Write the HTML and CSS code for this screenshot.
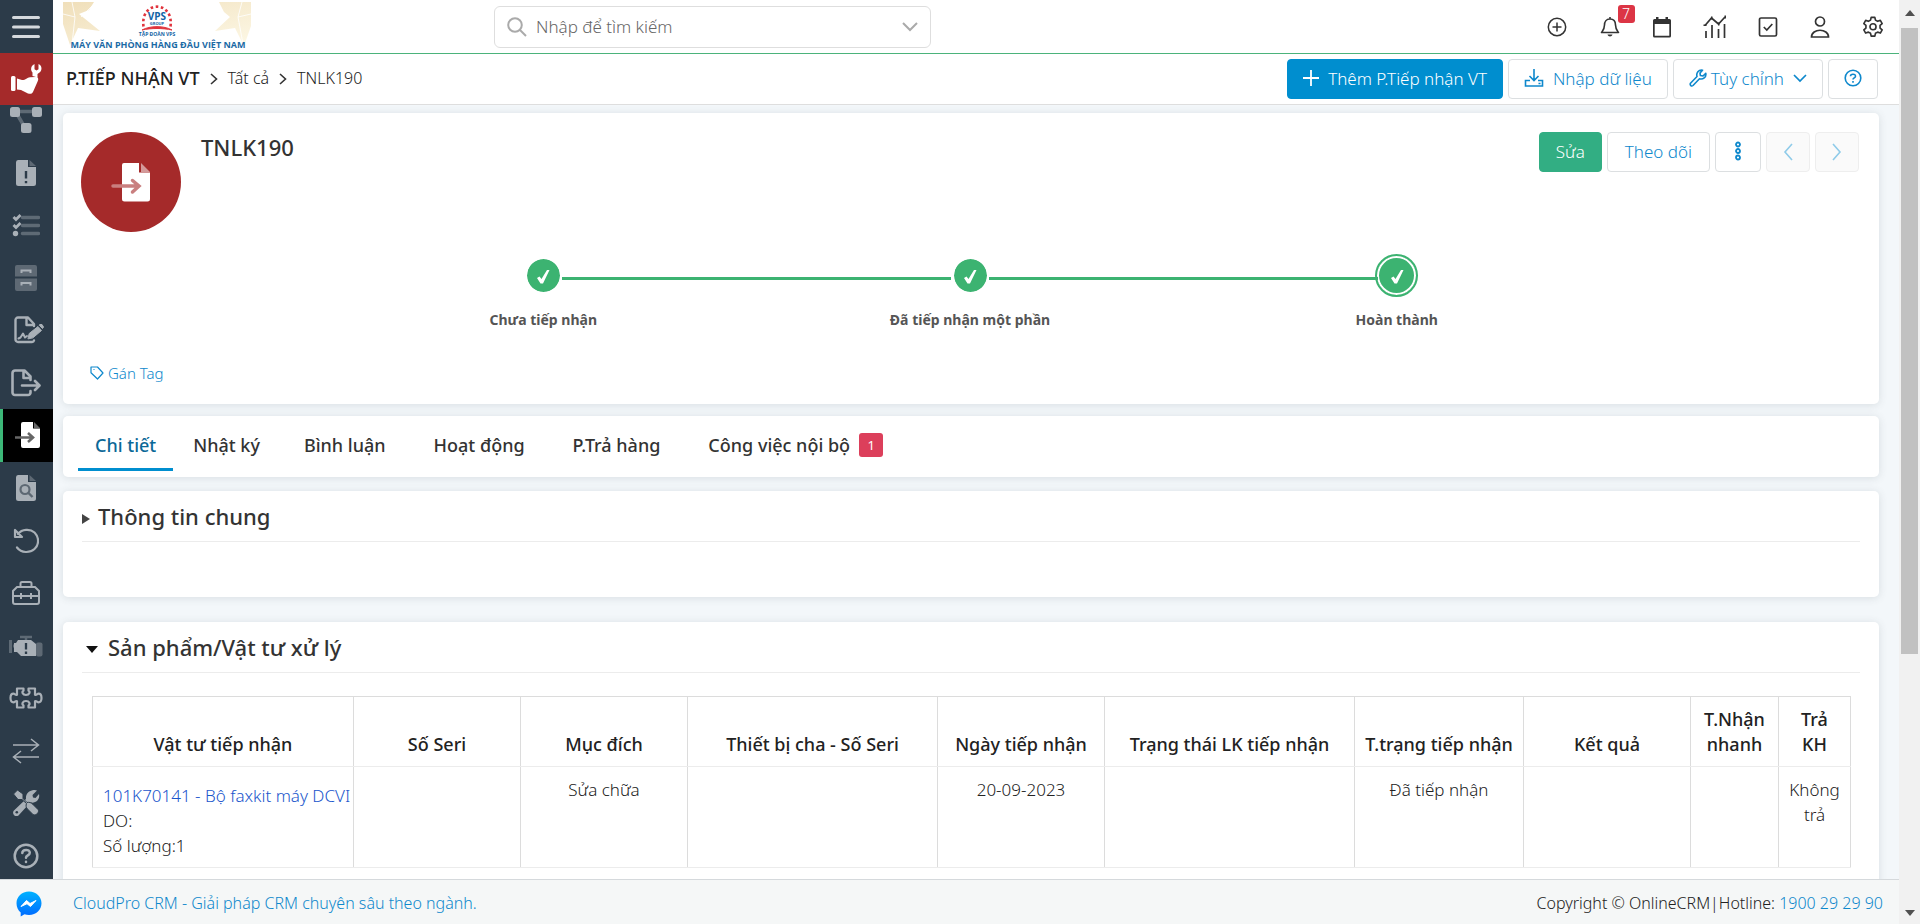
FILE: index.html
```html
<!DOCTYPE html>
<html lang="vi">
<head>
<meta charset="utf-8">
<meta name="viewport" content="width=device-width, initial-scale=1">
<title>TNLK190 - P.Tiếp nhận VT</title>
<link rel="stylesheet" href="styles.css">
</head>
<body>
<div class="app">
  <aside class="sidebar">
    <button class="menu-toggle" type="button" aria-label="Menu"><svg width="28" height="24" viewBox="0 0 28 24" fill="none" stroke="#d5d9dd" stroke-width="3" stroke-linecap="round"><path d="M1.500 2.500h25M1.500 12h25M1.500 21.500h25"/></svg></button>
    <a class="module-home" href="#" aria-label="Dịch vụ"><svg width="32" height="32" viewBox="0 0 32 32" fill="#fff"><rect x="1" y="13" width="4.500" height="15" rx="1.500"/><path d="M7 15.500l5 1.500c4 0 5-2.500 8-2.800l6-.2c2 0 3 2 1.600 4.500L23 29c-1 2-3 2-5 1.500L11 27l-4-.5z"/><path d="M22.500 13V9.500C20 7 21 2.500 24.500 1v5.200l2 1.300 2-1.300V1c3.500 1.500 4 6 1 8.500L27.500 11v3.500z"/></svg></a>
    <nav class="side-nav">
      <ul class="side-list">
        <li><a href="#" aria-label="Quy trình"><svg width="34" height="28" viewBox="0 0 34 28" fill="currentColor"><path d="M8 5.500h18M8 8l7 12" stroke="currentColor" stroke-width="3.500" opacity=".4"/><rect x="1" y="1" width="10" height="10" rx="2.500"/><rect x="23" y="1" width="10" height="10" rx="2.500"/><rect x="12" y="17" width="10.500" height="10" rx="2.500"/></svg></a></li>
        <li><a href="#" aria-label="Sự cố"><svg width="22" height="28" viewBox="0 0 22 28"><path d="M3 1h10v7h8v16.500a2.500 2.500 0 0 1-2.500 2.500H3.500A2.500 2.500 0 0 1 1 24.500V3.500A2.500 2.500 0 0 1 3 1z" fill="currentColor"/><path d="M14.500 1L21 7h-6.500z" fill="currentColor" opacity=".4"/><path d="M11 12v7.500M11 22v2.200" stroke="#2c3b49" stroke-width="2.400"/></svg></a></li>
        <li><a href="#" aria-label="Công việc"><svg width="28" height="24" viewBox="0 0 28 24"><path d="M10.500 4.500h16M10.500 12.500h16M10.500 20.500h16" stroke="currentColor" stroke-width="3.500" stroke-linecap="round" opacity=".4"/><path d="M1.500 4l2.500 2.500L8.500 2M1.500 12l2.500 2.500L8.500 10" stroke="currentColor" stroke-width="2.800" fill="none"/><circle cx="3.500" cy="20.500" r="2.700" fill="currentColor"/></svg></a></li>
        <li><a href="#" aria-label="Kho lưu trữ"><svg width="24" height="28" viewBox="0 0 24 28"><path d="M3 1h18a2 2 0 0 1 2 2v9.500H1V3a2 2 0 0 1 2-2zM1 14.500h22V25a2 2 0 0 1-2 2H3a2 2 0 0 1-2-2z" fill="currentColor" opacity=".4"/><path d="M7.500 9V6.500h9V9M7.500 21.500V19h9v2.500" stroke="currentColor" stroke-width="2" fill="none"/></svg></a></li>
        <li><a class="wide-icon" href="#" aria-label="Hợp đồng"><svg width="32" height="28" viewBox="0 0 32 28" fill="none" stroke="currentColor" stroke-width="2.400" stroke-linejoin="round" stroke-linecap="round"><path d="M21 10V8l-6-6.500H5A2.500 2.500 0 0 0 2.500 4v19.500A2.500 2.500 0 0 0 5 26h14a2 2 0 0 0 2-1.500M13.500 2v7H20"/><path d="M5.500 22.500l2-1 2.500-4 2 4 2-1.500" stroke-width="2"/><path d="M15 22.500l1.200-5L25 10.500l3.500 4L20 21.700zM27 8.500l2 0 1.500 2.500-1 1.500-3-3z" fill="currentColor" stroke-width="1"/></svg></a></li>
        <li><a href="#" aria-label="Phiếu xuất"><svg width="30" height="28" viewBox="0 0 30 28" fill="none" stroke="currentColor" stroke-width="2.600" stroke-linejoin="round" stroke-linecap="round"><path d="M19.500 11V7.500l-6-6H4A2.500 2.500 0 0 0 1.500 4v19.500A2.500 2.500 0 0 0 4 26h13a2.500 2.500 0 0 0 2.500-2.500V22M12.500 2v7H19M11 16.500h17M24 12l4.500 4.500L24 21"/></svg></a></li>
        <li><a class="active" href="#" aria-label="P.Tiếp nhận VT" aria-current="page"><svg width="28" height="28" viewBox="0 0 28 28"><path d="M9 1h10v6.500h7V25a2 2 0 0 1-2 2H9a2 2 0 0 1-2-2V3a2 2 0 0 1 2-2z" fill="#fff"/><path d="M20 1l6 6h-6z" fill="#666"/><path d="M1 16.500h17M14 12l5 4.500-5 4.500" fill="none" stroke="#666" stroke-width="2.600"/></svg></a></li>
        <li><a href="#" aria-label="Tra cứu"><svg width="22" height="28" viewBox="0 0 22 28"><path d="M3 1h10v7h8v16.500a2.500 2.500 0 0 1-2.500 2.500H3.500A2.500 2.500 0 0 1 1 24.500V3.500A2.500 2.500 0 0 1 3 1z" fill="currentColor"/><path d="M14.500 1L21 7h-6.500z" fill="currentColor" opacity=".4"/><circle cx="10" cy="15.500" r="4.500" fill="none" stroke="#5d6873" stroke-width="2.200"/><path d="M13.500 19l4 4" stroke="#5d6873" stroke-width="2.400"/></svg></a></li>
        <li><a href="#" aria-label="Hoàn trả"><svg width="26" height="26" viewBox="0 0 26 26" fill="none" stroke="currentColor" stroke-width="2.200" stroke-linejoin="round" stroke-linecap="round"><path d="M2 2v7h7zM5 6c4-5 12-5.500 16.500-1.500 5 5 4.500 12.500 0 16.500-4.500 4-13 4.500-17.500-1.500"/></svg></a></li>
        <li><a href="#" aria-label="Bảo trì"><svg width="28" height="26" viewBox="0 0 28 26" fill="none" stroke="currentColor" stroke-width="2"><path d="M8.500 7V3.500a1.500 1.500 0 0 1 1.500-1.500h8a1.500 1.500 0 0 1 1.500 1.500V7M5 7h18l4 4v11a2 2 0 0 1-2 2H3a2 2 0 0 1-2-2V11zM1 16h26M9 13v6M19 13v6"/></svg></a></li>
        <li><a href="#" aria-label="Thiết bị"><svg width="34" height="22" viewBox="0 0 34 22"><path d="M1.500 5v13M4 11h4" stroke="currentColor" stroke-width="3" opacity=".4"/><rect x="27" y="7.500" width="6.500" height="14" rx="2" fill="currentColor" opacity=".4"/><path d="M11 2h12M17 2v4" stroke="currentColor" stroke-width="2.500" opacity=".4"/><path d="M9 5h13l5 4v12H12l-4-4H5V8h2z" fill="currentColor"/><path d="M17 8v6.500M17 16.500v2.500" stroke="#2c3b49" stroke-width="2.300"/></svg></a></li>
        <li><a href="#" aria-label="Tiện ích"><svg width="34" height="22" viewBox="0 0 34 22" fill="none" stroke="currentColor" stroke-width="2.200" stroke-linejoin="round"><path d="M8 1.500h6.500v2.200c-2 1.300-1 4.300 2.500 4.300s4.500-3 2.500-4.300V1.500H26v6.200c1.500.8 2-1 3.500-1 4 0 4 8.600 0 8.600-1.500 0-2-1.800-3.500-1v6.200h-6.500v-2.200c2-1.300 1-4.300-2.500-4.300s-4.500 3-2.500 4.300v2.200H8v-6.200c-1.500-.8-2 1-3.500 1-4 0-4-8.600 0-8.600 1.500 0 2 1.800 3.500 1z"/></svg></a></li>
        <li><a href="#" aria-label="Luân chuyển"><svg width="28" height="26" viewBox="0 0 28 26" fill="none" stroke="currentColor" stroke-width="1.500"><path d="M1 7h25M19 1l7.500 6L19 13M27 19H2M9 13l-7.500 6L9 25"/></svg></a></li>
        <li><a href="#" aria-label="Công cụ"><svg width="28" height="28" viewBox="0 0 28 28" fill="currentColor"><path d="M20.500 1.200c2-.5 3.500-.2 4.500.3L20.500 6l.5 2.500 2.500.5L27 5c1.200 5-3 9.500-8 8.500l-3 2.500L6.500 26.500c-3 2-7-1.500-4.800-4.800L14 10c-.5-4.500 2-7.800 6.500-8.800z"/><path d="M1.500 5l4-4 5.500 4v4.500l4 4c2-.5 4 0 5.500 1.500l5.500 5.500c2 2.500-2.500 7-5 5l-5.500-5.500c-1.500-1.500-1.800-3.500-1-5.500l-4.500-4H6z" stroke="#2c3b49" stroke-width="1"/><circle cx="4.800" cy="23.300" r="1.300" fill="#2c3b49"/></svg></a></li>
        <li><a href="#" aria-label="Trợ giúp"><svg width="26" height="26" viewBox="0 0 26 26" fill="none" stroke="currentColor" stroke-width="2.500" stroke-linecap="round"><circle cx="13" cy="13" r="11.300"/><path d="M9.300 10c0-4 7.500-4.200 7.500-.3 0 2.800-3.800 2.500-3.800 5M13 18.800v.2"/></svg></a></li>
      </ul>
    </nav>
  </aside>

  <header class="topbar">
    <a class="brand" href="#" aria-label="VPS Group">
      <svg width="188" height="50" viewBox="0 0 188 50">
        <defs><linearGradient id="gold" x1="0" y1="0" x2="1" y2="1"><stop offset="0" stop-color="#f0dfba"/><stop offset="1" stop-color="#fdf8e6"/></linearGradient></defs>
        <path fill="url(#gold)" d="M0 0h31l-5 8-10 4 21 17-22-3-8 17L0 22zM188 0h-32l5 10 6 5-15 14 20-3 9 18 7-20z"/>
        <path d="M0 12l12 3L9 0M12 15l-3 27M18 15L33 0M188 12l-13 3 4-15M175 15l5 27" stroke="#fff" stroke-width="1" fill="none" opacity=".8"/>
        <path d="M80.500 24.500C77-2 111-2 107.500 24.500" fill="none" stroke="#e0333c" stroke-width="2.600" stroke-dasharray="2.600 2.600"/>
        <path d="M79 28c8-4.500 22-4.500 30 0-9-2-21-2-30 0z" fill="#e0333c" stroke="#e0333c"/>
        <text class="logo-vps" x="94" y="18" text-anchor="middle">VPS</text>
        <text class="logo-tiny" x="94" y="23" text-anchor="middle">GROUP</text>
        <text class="logo-small" x="94" y="34" text-anchor="middle">TẬP ĐOÀN VPS</text>
        <text class="logo-line" x="95" y="46" text-anchor="middle">MÁY VĂN PHÒNG HÀNG ĐẦU VIỆT NAM</text>
      </svg>
    </a>
    <form class="search" role="search">
      <svg width="20" height="20" viewBox="0 0 20 20" fill="none" stroke="#aaa" stroke-width="2"><circle cx="8" cy="8" r="6.800"/><path d="M13 13l6 6"/></svg>
      <input class="search-input" type="text" placeholder="Nhập để tìm kiếm" aria-label="Nhập để tìm kiếm">
      <svg width="16" height="10" viewBox="0 0 16 10" fill="none" stroke="#aaa" stroke-width="2"><path d="M1 1l7 7 7-7"/></svg>
    </form>
    <div class="top-icons">
      <button type="button" aria-label="Tạo nhanh"><svg width="20" height="20" viewBox="0 0 20 20" fill="none" stroke="currentColor" stroke-width="1.500"><circle cx="10" cy="10" r="8.700"/><path d="M10 5.500v9M5.500 10h9"/></svg></button>
      <button type="button" aria-label="Thông báo"><svg width="20" height="22" viewBox="0 0 20 22" fill="none" stroke="currentColor" stroke-width="1.600" stroke-linejoin="round"><path d="M10 1v2M10 3C6 3 4.500 6 4.500 9c0 4-1.500 5.500-3 7.500h17c-1.500-2-3-3.500-3-7.500 0-3-1.500-6-5.500-6z"/><path d="M7.500 18.500h5c-.5 2.500-4.500 2.500-5 0z" fill="currentColor" stroke="none"/></svg><span class="count">7</span></button>
      <button type="button" aria-label="Lịch"><svg width="20" height="22" viewBox="0 0 20 22"><path d="M1 4.500A1.500 1.500 0 0 1 2.500 3H4V1h2.500v2h7V1H16v2h1.500A1.500 1.500 0 0 1 19 4.500V20a1.500 1.500 0 0 1-1.500 1.500h-15A1.500 1.500 0 0 1 1 20zM2.700 8v11.800h14.600V8z" fill="currentColor" fill-rule="evenodd"/></svg></button>
      <button type="button" aria-label="Báo cáo"><svg width="24" height="24" viewBox="0 0 24 24" fill="none" stroke="currentColor" stroke-width="1.700"><path d="M2 10.500L8.500 3l7 6L22 2M3 16v7M9 10v13M15.500 14v9M21.500 9v14"/><path d="M2 9.500v1.500M8 3h1.500M15 9h1.500M21.500 2H23" stroke-width="3"/></svg></button>
      <button type="button" aria-label="Việc cần làm"><svg width="20" height="22" viewBox="0 0 20 22" fill="none" stroke="currentColor" stroke-width="1.700"><rect x="1.500" y="2" width="17" height="18" rx="1.500"/><path d="M5.800 11l3 3 5.500-6"/></svg></button>
      <button type="button" aria-label="Tài khoản"><svg width="20" height="24" viewBox="0 0 20 24" fill="none" stroke="currentColor" stroke-width="1.700"><circle cx="10" cy="6.500" r="4.500"/><path d="M1.500 22c0-9 17-9 17 0z"/></svg></button>
      <button type="button" aria-label="Cài đặt"><svg width="22" height="24" viewBox="0 0 24 24" fill="none" stroke="currentColor" stroke-width="1.800" stroke-linejoin="round"><path d="M10 1.500h4l.7 3 2.300 1.300 3-1 2 3.500-2.300 2v2.800l2.300 2-2 3.500-3-1-2.300 1.300-.7 3.100h-4l-.7-3.100L7 17.600l-3 1-2-3.500 2.300-2v-2.800L2 8.300l2-3.500 3 1 2.300-1.300z"/><circle cx="12" cy="11.700" r="3.300"/></svg></button>
    </div>
  </header>

  <div class="crumb-bar">
    <nav class="crumbs" aria-label="Breadcrumb">
      <a class="crumb-module" href="#">P.TIẾP NHẬN VT</a>
      <svg width="8" height="12" viewBox="0 0 8 12" fill="none" stroke="#333" stroke-width="1.600"><path d="M1 1l5.500 5L1 11"/></svg>
      <a class="crumb" href="#">Tất cả</a>
      <svg width="8" height="12" viewBox="0 0 8 12" fill="none" stroke="#333" stroke-width="1.600"><path d="M1 1l5.500 5L1 11"/></svg>
      <span class="crumb">TNLK190</span>
    </nav>
    <div class="actions">
      <button class="btn btn-primary" type="button"><svg width="16" height="16" viewBox="0 0 16 16" fill="none" stroke="#fff" stroke-width="1.800"><path d="M8 0v16M0 8h16"/></svg>Thêm P.Tiếp nhận VT</button>
      <button class="btn" type="button"><svg width="20" height="20" viewBox="0 0 20 20" fill="none" stroke="currentColor" stroke-width="1.600"><path d="M10 1v11M5.500 8l4.500 4.500L14.500 8M6 12.500H1.500V18h17v-5.500H14M14.500 15.500h2"/></svg>Nhập dữ liệu</button>
      <button class="btn btn-tight" type="button"><svg width="18" height="18" viewBox="0 0 18 18" fill="none" stroke="currentColor" stroke-width="1.600" stroke-linejoin="round"><path d="M13.500 1.200C9.500.5 7 4 8 7.500l-6.500 6.700c-1 2 1 3.500 2.500 2.300l6.500-6.700c3.500 1 7-1.500 6.300-5.500L14 7l-2.600-.5L11 4z"/></svg>Tùy chỉnh<svg class="btn-caret" width="14" height="9" viewBox="0 0 14 9" fill="none" stroke="currentColor" stroke-width="1.700"><path d="M1 1l6 6 6-6"/></svg></button>
      <button class="btn" type="button" aria-label="Trợ giúp"><svg width="18" height="18" viewBox="0 0 18 18" fill="none" stroke="currentColor" stroke-width="1.600"><circle cx="9" cy="9" r="7.800"/><path d="M6.500 7.200c0-2.500 5-2.800 5 0 0 1.600-2.500 1.700-2.500 3.300M9 12v1.700"/></svg></button>
    </div>
  </div>

  <main class="content">
    <section class="card summary">
      <div class="record-head">
        <div class="avatar"><svg width="40" height="40" viewBox="0 0 40 40"><path d="M13 1h15v9.500h11V37a2.500 2.500 0 0 1-2.500 2.500h-23A2.500 2.500 0 0 1 11 37V3a2 2 0 0 1 2-2z" fill="#fff"/><path d="M30 1l9 9h-9z" fill="#d49a9a"/><path d="M2 24h25M21.500 18.500L28 24l-6.500 6" fill="none" stroke="#c97f7f" stroke-width="3.500" stroke-linecap="round"/></svg></div>
        <h1 class="record-title">TNLK190</h1>
        <div class="actions">
          <button class="btn btn-green" type="button">Sửa</button>
          <button class="btn btn-wide" type="button">Theo dõi</button>
          <button class="btn" type="button" aria-label="Thêm"><svg class="dots" width="8" height="20" viewBox="0 0 8 20" fill="none" stroke="currentColor" stroke-width="1.800"><circle cx="4" cy="3.500" r="2"/><circle cx="4" cy="10" r="2"/><circle cx="4" cy="16.500" r="2"/></svg></button>
          <button class="btn" type="button" disabled aria-label="Trước"><svg width="10" height="18" viewBox="0 0 10 18" fill="none" stroke="currentColor" stroke-width="1.600"><path d="M9 1L2 9l7 8"/></svg></button>
          <button class="btn" type="button" disabled aria-label="Sau"><svg width="10" height="18" viewBox="0 0 10 18" fill="none" stroke="currentColor" stroke-width="1.600"><path d="M1 1l7 8-7 8"/></svg></button>
        </div>
      </div>
      <ol class="steps">
        <li class="step"><span class="dot"><svg width="14" height="16" viewBox="0 0 14 16"><path d="M1 9l2.500-1.500L5.500 10 11 1h2.500L7 14.500H4.500z" fill="#fff"/></svg></span><span class="step-label">Chưa tiếp nhận</span></li>
        <li class="step"><span class="dot"><svg width="14" height="16" viewBox="0 0 14 16"><path d="M1 9l2.500-1.500L5.500 10 11 1h2.500L7 14.500H4.500z" fill="#fff"/></svg></span><span class="step-label">Đã tiếp nhận một phần</span></li>
        <li class="step step-current"><span class="dot"><svg width="14" height="16" viewBox="0 0 14 16"><path d="M1 9l2.500-1.500L5.500 10 11 1h2.500L7 14.500H4.500z" fill="#fff"/></svg></span><span class="step-label">Hoàn thành</span></li>
      </ol>
      <a class="tag-link" href="#"><svg width="14" height="14" viewBox="0 0 14 14" fill="none" stroke="currentColor" stroke-width="1.200" stroke-linejoin="round"><path d="M1 1h6.500L13 7l-5.500 6L1 6.800z"/><path d="M3.500 3.500h1"/></svg>Gán Tag</a>
    </section>

    <nav class="card tabs">
      <a class="tab tab-near active" href="#">Chi tiết</a>
      <a class="tab tab-near" href="#">Nhật ký</a>
      <a class="tab" href="#">Bình luận</a>
      <a class="tab" href="#">Hoạt động</a>
      <a class="tab" href="#">P.Trả hàng</a>
      <a class="tab" href="#">Công việc nội bộ<span class="tab-count">1</span></a>
    </nav>

    <section class="card block block-closed">
      <h2 class="block-title"><svg width="8" height="10" viewBox="0 0 8 10"><path d="M0 0l8 5-8 5z" fill="#444"/></svg>Thông tin chung</h2>
    </section>

    <section class="card block">
      <h2 class="block-title block-title-open"><svg width="12" height="8" viewBox="0 0 12 8"><path d="M0 0h12L6 7z" fill="#111"/></svg>Sản phẩm/Vật tư xử lý</h2>
      <div class="table-wrap">
        <table class="items">
          <colgroup><col class="c-item"><col class="c-mid"><col class="c-mid"><col class="c-wide"><col class="c-mid"><col class="c-wide"><col class="c-state"><col class="c-mid"><col class="c-fast"><col class="c-back"></colgroup>
          <thead><tr><th>Vật tư tiếp nhận</th><th>Số Seri</th><th>Mục đích</th><th>Thiết bị cha - Số Seri</th><th>Ngày tiếp nhận</th><th>Trạng thái LK tiếp nhận</th><th>T.trạng tiếp nhận</th><th>Kết quả</th><th>T.Nhận nhanh</th><th>Trả KH</th></tr></thead>
          <tbody><tr>
            <td class="item-cell"><a class="item-link" href="#">101K70141 - Bộ faxkit máy DCVI</a><div>DO:</div><div>Số lượng:1</div></td>
            <td></td><td>Sửa chữa</td><td></td><td>20-09-2023</td><td></td><td>Đã tiếp nhận</td><td></td><td></td><td>Không trả</td>
          </tr></tbody>
        </table>
      </div>
    </section>
  </main>

  <footer class="footer">
    <a class="chat" href="#" aria-label="Messenger"><svg width="26" height="26" viewBox="0 0 26 26"><defs><linearGradient id="msg" x1="0" y1="0" x2="0" y2="1"><stop offset="0" stop-color="#00b2ff"/><stop offset="1" stop-color="#006aff"/></linearGradient></defs><path d="M13 0.500C5.700.5.500 5.700.5 12.200c0 4 1.600 7 4.200 9.200V25.500l3.800-2.200c1.400.4 2.900.6 4.500.6 7.300 0 12.500-5.200 12.500-11.700S20.300.5 13 .5z" fill="url(#msg)"/><path d="M5 15.500l5.500-6 3.500 3 6-3-5.500 6-3.500-2.800z" fill="#fff" stroke="#fff"/></svg></a>
    <a class="footer-link" href="#">CloudPro CRM - Giải pháp CRM chuyên sâu theo ngành.</a>
    <p class="copyright">Copyright © OnlineCRM|Hotline: <a class="footer-link" href="#">1900 29 29 90</a></p>
  </footer>

  <div class="scroll-track" aria-hidden="true">
    <svg width="10" height="6" viewBox="0 0 10 6"><path d="M5 0l5 6H0z" fill="#505050"/></svg>
    <div class="scroll-rail"><div class="scroll-thumb"></div></div>
    <svg width="10" height="6" viewBox="0 0 10 6"><path d="M5 6l5-6H0z" fill="#505050"/></svg>
  </div>
</div>
</body>
</html>
```
FILE: styles.css
```css
* { box-sizing: border-box; }

body {
  margin: 0;
  font-family: "Noto Sans", "Open Sans", sans-serif;
  font-size: 17px;
  font-weight: 300;
  line-height: 25px;
  color: #222;
}

a { color: inherit; text-decoration: none; }
button { font: inherit; color: inherit; }
svg { display: block; flex: none; }
h1, h2, p, ul, ol { margin: 0; padding: 0; }
ul, ol { list-style: none; }

.app {
  display: grid;
  grid-template-columns: 53px minmax(0, 1fr) 21px;
  grid-template-rows: 54px 51px minmax(0, 1fr) 45px;
  grid-template-areas: "side top scroll" "side crumb scroll" "side main scroll" "foot foot scroll";
  height: 100vh;
  background: #f3f7fa;
}

/* Sidebar */
.sidebar {
  grid-area: side;
  display: flex;
  flex-direction: column;
  min-height: 0;
  background: #2c3b49;
}
.menu-toggle {
  display: grid;
  place-items: center;
  height: 53px;
  flex: none;
  padding: 0 1px 0 0;
  border: 0;
  background: none;
}
.module-home {
  display: grid;
  place-items: center;
  height: 52px;
  flex: none;
  padding-right: 1px;
  background: #a52a2a;
}
.side-nav { flex: 1; min-height: 0; display: flex; overflow: hidden; }
.side-list {
  flex: 1;
  display: grid;
  grid-auto-rows: 1fr;
  margin: -11px 0 -3px;
  color: #a9b0b7;
}
.side-list li { display: grid; min-height: 0; }
.side-list a { display: grid; place-items: center; padding-right: 1px; }
.side-list .wide-icon { padding: 0 0 0 4px; }
.side-list .active { background: #000; border-left: 3px solid #3cb878; }

/* Top bar */
.topbar {
  grid-area: top;
  display: flex;
  align-items: center;
  background: #fff;
  padding-left: 10px;
  border-bottom: 1px solid #4bb37b;
}
.brand { flex: none; margin-right: 243px; }
.logo-vps { font: bold 10px "Open Sans", sans-serif; fill: #1263a5; }
.logo-tiny { font: bold 4px "Open Sans", sans-serif; fill: #1263a5; }
.logo-small { font: bold 5px "Open Sans", sans-serif; fill: #1263a5; }
.logo-line { font: bold 9px "Open Sans", sans-serif; fill: #1b6aa5; }
.search {
  display: flex;
  align-items: center;
  gap: 9px;
  flex: 0 1 437px;
  height: 42px;
  padding: 0 12px;
  border: 1px solid #dedede;
  border-radius: 6px;
}
.search-input {
  flex: 1;
  min-width: 0;
  padding: 0;
  border: 0;
  outline: 0;
  background: none;
  font: inherit;
  color: #333;
}
.search-input::placeholder { color: #666; opacity: 1; }
.top-icons { display: flex; width: 368px; margin-left: auto; }
.top-icons button {
  position: relative;
  display: grid;
  place-items: center;
  flex: 1;
  height: 53px;
  padding: 0;
  border: 0;
  background: none;
  color: #333;
}
.count {
  position: absolute;
  top: 5px;
  left: 34px;
  width: 17px;
  border-radius: 3px;
  background: #dc3545;
  color: #fff;
  font-size: 14px;
  line-height: 18px;
  text-align: center;
}

/* Breadcrumb bar */
.crumb-bar {
  grid-area: crumb;
  display: flex;
  align-items: center;
  justify-content: space-between;
  padding: 0 21px 0 13px;
  background: #fff;
  border-bottom: 1px solid #dedede;
}
.crumbs { display: flex; align-items: center; gap: 10px; padding-bottom: 1px; }
.crumb-module { font-size: 18px; font-weight: 500; }
.crumb { font-size: 16px; }
.actions { display: flex; gap: 5px; }
.btn {
  display: flex;
  align-items: center;
  justify-content: center;
  gap: 9px;
  height: 40px;
  padding: 0 15px 2px;
  border: 1px solid #dcdfe1;
  border-radius: 4px;
  background: #fff;
  color: #0e88cc;
  font-size: 17px;
  white-space: nowrap;
}
.btn-primary { background: #008ecf; border-color: #008ecf; color: #fff; }
.btn-green { background: #32ae83; border-color: #32ae83; color: #fff; padding: 0 16px 2px; }
.btn-wide { padding: 0 17px 2px; }
.btn-tight { gap: 4px; }
.btn-caret { margin-left: 5px; }
.dots { margin: 0 3px; }
.btn:disabled { background: #fafafa; border-color: #eee; color: #8fcbe9; padding: 0 16px; }

/* Content */
.content {
  grid-area: main;
  min-height: 0;
  overflow: hidden;
  padding: 8px 20px 0 10px;
}
.card {
  background: #fff;
  border-radius: 5px;
  box-shadow: 0 1px 8px rgba(60, 70, 80, 0.14);
}
.summary { padding: 19px 20px 18px 18px; margin-bottom: 12px; }
.record-head { display: flex; align-items: flex-start; gap: 20px; }
.avatar {
  display: grid;
  place-items: center;
  width: 100px;
  height: 100px;
  border-radius: 50%;
  background: #a52a2a;
}
.record-title { flex: 1; font-size: 22px; font-weight: 500; line-height: 30px; color: #333; }
.steps { display: flex; width: 72%; margin: 22px auto 30px; }
.step {
  position: relative;
  flex: 1;
  display: flex;
  flex-direction: column;
  align-items: center;
  gap: 12px;
}
.step + .step::before {
  content: "";
  position: absolute;
  top: 23px;
  left: calc(-50% + 19px);
  right: calc(50% + 19px);
  height: 3px;
  background: #3cb371;
}
.dot {
  display: grid;
  place-items: center;
  width: 43px;
  height: 43px;
  padding-top: 2px;
  border: 5px solid #fff;
  border-radius: 50%;
  background: #3cb371;
  background-clip: padding-box;
}
.step-current .dot { border-width: 2px; border-color: #3cb371; box-shadow: inset 0 0 0 2px #fff; }
.step-label { font-size: 14px; font-weight: 700; line-height: 22px; color: #555; }
.tag-link {
  display: inline-flex;
  align-items: center;
  gap: 4px;
  padding-left: 9px;
  font-size: 15px;
  line-height: 24px;
  color: #0e88cc;
}

.tabs { display: flex; padding: 0 15px; height: 61px; margin-bottom: 14px; }
.tab {
  display: flex;
  align-items: center;
  gap: 9px;
  height: 55px;
  margin: 0;
  padding: 6px 24px 0;
  border-bottom: 3px solid transparent;
  font-size: 18px;
  font-weight: 500;
  color: #333;
  white-space: nowrap;
}
.tab-near { padding: 6px 17px 0; }
.tab-near + .tab-near { padding: 6px 20px 0; }
.tab.active { color: #0b6897; border-color: #008ecf; }
.tab-count {
  width: 24px;
  border-radius: 3px;
  background: #dc3f5b;
  color: #fff;
  font-size: 13px;
  font-weight: 400;
  line-height: 24px;
  text-align: center;
}

.block { padding: 9px 19px; }
.block-closed { min-height: 106px; margin-bottom: 25px; }
.block-title {
  display: flex;
  align-items: center;
  gap: 8px;
  padding-bottom: 9px;
  border-bottom: 1px solid #ececec;
  font-size: 22px;
  font-weight: 500;
  line-height: 32px;
  color: #333;
}
.block-title svg { margin-top: 5px; }
.block-title-open { gap: 10px; padding-left: 4px; }
.table-wrap { padding: 23px 9px 60px 10px; }
.items {
  width: 100%;
  table-layout: fixed;
  border-collapse: collapse;
}
.items th, .items td { border: 1px solid #dcdcdc; border-bottom-color: #ececec; text-align: center; }
.items th { padding: 10px 9px 9px; vertical-align: bottom; font-size: 18px; font-weight: 500; }
.items td { padding: 10px 8px; vertical-align: top; }
.items .item-cell { padding: 16px 0 9px 10px; text-align: left; white-space: nowrap; overflow: hidden; }
.item-link { display: block; color: #1a56cc; }
.c-item { width: 261px; }
.c-mid { width: 167px; }
.c-wide { width: 250px; }
.c-state { width: 169px; }
.c-fast { width: 88px; }
.c-back { width: 72px; }

/* Footer */
.footer {
  grid-area: foot;
  display: flex;
  align-items: center;
  padding: 3px 16px 0;
  border-top: 1px solid #d5d9dc;
  background: #f5f7f7;
  font-size: 16px;
}
.chat { margin-right: 31px; }
.copyright { margin-left: auto; }
.footer-link { color: #0e88cc; }

/* Scroll indicator */
.scroll-track {
  grid-area: scroll;
  display: flex;
  flex-direction: column;
  align-items: center;
  padding: 10px 2px 8px;
  background: #f1f1f1;
}
.scroll-rail { flex: 1; align-self: stretch; padding: 12px 0; }
.scroll-thumb { height: 72%; background: #c1c1c1; }
```
